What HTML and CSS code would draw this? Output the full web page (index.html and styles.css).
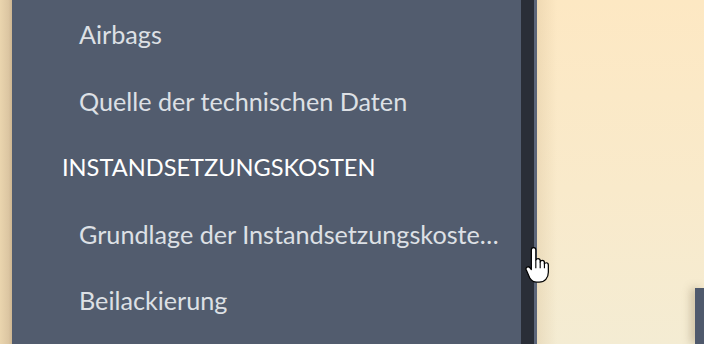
FILE: index.html
```html
<!DOCTYPE html>
<html lang="de">
<head>
<meta charset="utf-8">
<title>Navigation</title>
<link rel="stylesheet" href="styles.css">
</head>
<body>
<div class="screen">
  <div class="edge"></div>
  <nav class="sidebar">
    <ul class="menu">
      <li class="item">Airbags</li>
      <li class="item">Quelle der technischen Daten</li>
      <li class="heading">INSTANDSETZUNGSKOSTEN</li>
      <li class="item">Grundlage der Instandsetzungskoste…</li>
      <li class="item">Beilackierung</li>
    </ul>
  </nav>
  <div class="scrollbar"></div>
  <div class="rim"></div>
  <main class="stage">
    <div class="window-corner"></div>
  </main>
  <svg class="cursor" width="25" height="38" viewBox="0 0 22 34" aria-hidden="true">
    <path d="M5.5 2.5c0-1.2 .9-2 2-2s2 .8 2 2v9.5c.3-1 1-1.6 2-1.6s1.9.8 1.9 2v1c.3-.9 1-1.4 1.9-1.4 1.1 0 1.9.8 1.9 2v1.2c.3-.7 1-1.1 1.7-1.1 1.1 0 1.8.8 1.8 1.9v6.5c0 5.2-3.2 9-8.2 9h-2.2c-2.8 0-4.6-1.300-6-3.4L1.1 20.9c-.7-1-.5-2.2.4-2.8.9-.6 2.1-.4 2.8.5l1.2 1.6z" fill="#fff" stroke="#000" stroke-width="1.1" stroke-linejoin="round"/>
    <path d="M9.5 12v7M13.4 13.3V19M17.2 14.3V19" stroke="#000" stroke-width="1" fill="none"/>
  </svg>
</div>
</body>
</html>
```

FILE: styles.css
```css
html, body {
  margin: 0;
  padding: 0;
}

body {
  width: 704px;
  height: 344px;
  overflow: hidden;
  font-family: Lato, "Open Sans", "DejaVu Sans", sans-serif;
}

.screen {
  position: relative;
  display: flex;
  width: 704px;
  height: 344px;
  overflow: hidden;
}

.edge {
  width: 12px;
  flex: none;
  background: linear-gradient(90deg, #ead5ae 0%, #dcc6a2 70%, #cdb692 100%);
}

.sidebar {
  width: 509px;
  flex: none;
  background: #525c6e;
  overflow: hidden;
}

.menu {
  list-style: none;
  margin: 0;
  padding: 1px 0 0 0;
}

.menu li {
  height: 66.5px;
  line-height: 66.5px;
  font-size: 25.2px;
  white-space: nowrap;
}

.item {
  padding-left: 67px;
  color: #dde0e5;
}

.heading {
  padding-left: 50px;
  color: #ffffff;
  font-size: 23.6px !important;
}

.scrollbar {
  width: 13px;
  flex: none;
  background: #2a2e37;
}

.rim {
  width: 3px;
  flex: none;
  background: #5d6679;
}

.stage {
  flex: 1;
  display: flex;
  flex-direction: column;
  justify-content: flex-end;
  align-items: flex-end;
  background:
    linear-gradient(90deg, rgba(214, 190, 150, 0.35) 0%, rgba(214, 190, 150, 0) 12%),
    linear-gradient(180deg, #fde8c3 0%, #f9eacb 55%, #f4ecd3 100%);
}

.window-corner {
  width: 9px;
  height: 56px;
  background: #4f596c;
  box-shadow: -4px 0 8px rgba(120, 100, 70, 0.35);
}

.cursor {
  position: absolute;
  left: 525px;
  top: 247px;
}
```
